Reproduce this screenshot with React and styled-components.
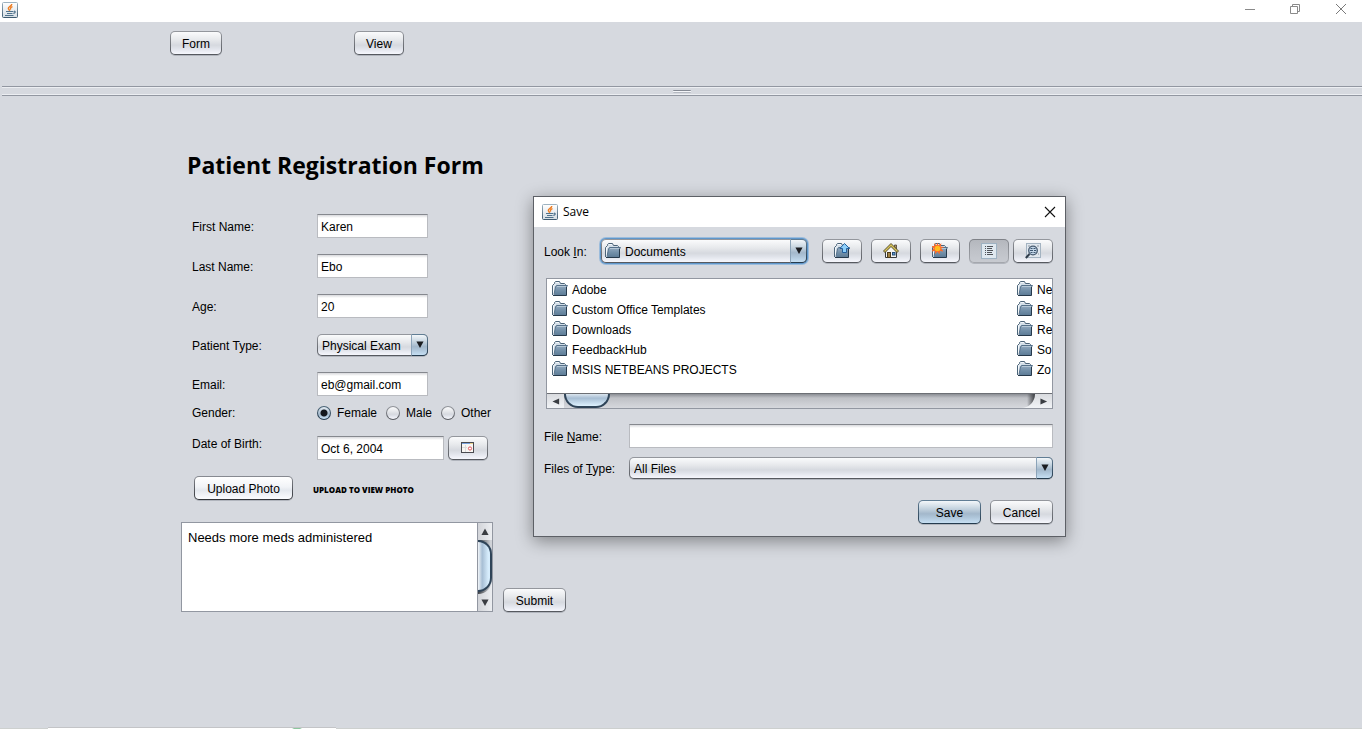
import React from "react";
import styled, { createGlobalStyle, css } from "styled-components";

const UI_FONT = '"Liberation Sans", Arial, sans-serif';
const TITLE_FONT = '"Open Sans", "Noto Sans", sans-serif';

const Global = createGlobalStyle`
  *, *::before, *::after { box-sizing: border-box; }
  body {
    margin: 0;
    background: #d6d9df;
    color: #000;
    font: 12px/16px ${UI_FONT};
  }
  button, input, select, textarea { font: inherit; color: inherit; }
`;

/* ---------- shared controls ---------- */

const silver = css`
  background:
    linear-gradient(#fafbfc, #e7e9ec 35%, #d6d9df 60%, #e0e3ea 75%, #f6f7fd) padding-box,
    linear-gradient(#95989e, #55585e) border-box;
`;
const blue = css`
  background:
    linear-gradient(#f3f7fa, #c4d3df 35%, #a3b8cb 58%, #afc6da 75%, #c6dff3) padding-box,
    linear-gradient(#627f96, #23394c) border-box;
`;
const white = css`
  background:
    linear-gradient(#ffffff, #f1f3f7 45%, #e4e8ee 60%, #fbfcff) padding-box,
    linear-gradient(#888b92, #303338) border-box;
`;
const pressed = css`
  background:
    linear-gradient(#b4b7bd, #bfc2c8 50%, #c7cad0) padding-box,
    linear-gradient(#7e8187, #a5a8ae) border-box;
`;
const faces = { silver, blue, white, pressed };

const Button = styled.button`
  height: 24px;
  padding: 1px 11px 0;
  border: 1px solid transparent;
  border-radius: 5px;
  box-shadow: 0 1px 0 rgba(110, 115, 125, 0.35);
  white-space: nowrap;
  min-width: ${(p) => p.$min || "0"};
  ${(p) => faces[p.$face || "silver"]}
`;

const IconButton = styled(Button)`
  display: flex;
  align-items: center;
  justify-content: center;
  width: 40px;
  padding: 0;
  flex: none;
`;

const Field = styled.input`
  width: ${(p) => (p.$width ? p.$width : "100%")};
  height: 24px;
  padding: 1px 3px 0;
  border: 1px solid #b9bbc0;
  border-top-color: #85888e;
  border-radius: 0;
  background: linear-gradient(#d8d9dc, #fff 3px);
  outline: none;
`;

const ComboBox = styled.div`
  position: relative;
  width: ${(p) => p.$width || "auto"};
  height: ${(p) => (p.$focused ? "24px" : "22px")};
  border-radius: 5px;
  box-shadow: ${(p) =>
    p.$focused
      ? "0 0 0 1px #5f97cb, 0 0 0 2px #9bbcdc"
      : "0 1px 0 rgba(110, 115, 125, 0.35)"};
`;
const ComboSelect = styled.select`
  display: block;
  appearance: none;
  width: 100%;
  height: 100%;
  padding: 1px 18px 0 ${(p) => (p.$icon ? "23px" : "4px")};
  border: 1px solid transparent;
  border-radius: 5px;
  outline: none;
  ${silver}
`;
const ComboArrow = styled.span`
  position: absolute;
  top: 0;
  right: 0;
  bottom: 0;
  width: 17px;
  display: flex;
  align-items: center;
  justify-content: center;
  border: 1px solid transparent;
  border-left-color: #8ba3b8;
  border-radius: 0 5px 5px 0;
  pointer-events: none;
  ${blue}
`;
const ComboIcon = styled.span`
  position: absolute;
  top: 4px;
  left: 4px;
  display: flex;
  pointer-events: none;
`;

function Combo({ id, icon, options, ...rest }) {
  return (
    <ComboBox {...rest}>
      <ComboSelect id={id} $icon={!!icon}>
        {options.map((o) => (
          <option key={o}>{o}</option>
        ))}
      </ComboSelect>
      {icon && <ComboIcon>{icon}</ComboIcon>}
      <ComboArrow>
        <Triangle dir="down" />
      </ComboArrow>
    </ComboBox>
  );
}

/* ---------- icons ---------- */

const paths = {
  down: "M0.5 0.5h8L4.5 8z",
  up: "M0.5 8h8L4.5 0.5z",
  left: "M8 0.5v8L0.5 4.5z",
  right: "M0.5 0.5v8L8 4.5z",
};
function Triangle({ dir, flat }) {
  const horizontal = dir === "left" || dir === "right";
  return (
    <svg
      width="8"
      height={horizontal ? 7 : 8}
      viewBox="0 0 9 9"
      preserveAspectRatio="none"
      aria-hidden="true"
    >
      <path d={paths[dir]} fill={flat ? "#3a3d42" : "#1a1c20"} />
    </svg>
  );
}

function JavaIcon() {
  return (
    <svg width="16" height="16" viewBox="0 0 16 16" aria-hidden="true">
      <defs>
        <linearGradient id="javaFace" x1="0" y1="0" x2="0" y2="1">
          <stop offset="0" stopColor="#ffffff" />
          <stop offset="1" stopColor="#d5dde4" />
        </linearGradient>
        <linearGradient id="javaEdge" x1="0" y1="0" x2="0" y2="1">
          <stop offset="0" stopColor="#9db2c0" />
          <stop offset="1" stopColor="#3e5a70" />
        </linearGradient>
      </defs>
      <rect x="0.5" y="0.5" width="15" height="15" rx="1" fill="url(#javaFace)" stroke="url(#javaEdge)" />
      <path d="M9.800 2C10 4 6 4.600 6.300 6.400C6.500 7.500 7.600 7.900 7.700 8.900M10.500 4.700C8.300 5.600 7.900 6.500 8.900 7.500" fill="none" stroke="#ee7d22" strokeWidth="1.400" />
      <path d="M4 9.500h7.500M5 11.500h5.500M12 9.200c1.800 0 1.400 2-0.700 2.200M3 13.500h8.500" fill="none" stroke="#4f728c" strokeWidth="1.200" />
    </svg>
  );
}

function FolderIcon({ children }) {
  return (
    <svg width="16" height="16" viewBox="0 0 16 16" aria-hidden="true">
      <defs>
        <linearGradient id="folderFront" x1="0" y1="0" x2="0" y2="1">
          <stop offset="0" stopColor="#94abc0" />
          <stop offset="0.5" stopColor="#7390a9" />
          <stop offset="1" stopColor="#5c7a95" />
        </linearGradient>
      </defs>
      <path d="M0.500 14V4.500L2.500 2.500V1.500L3.500 0.500H7.500L8.500 2.500H12.500L13.500 3.500V14" fill="#d3dee8" stroke="#4c6478" />
      <path d="M1.500 13.500V5L3.500 3M4 1.500h3" fill="none" stroke="#f4f8fb" />
      <path d="M4.500 4.500H15.500L14.500 6V14.500H2L3.500 6z" fill="url(#folderFront)" />
      <path d="M2 13.500L3.500 6L4.500 4.500H15.500L14.500 6" fill="none" stroke="#56718a" />
      <path d="M14.500 6v8.500H1" fill="none" stroke="#26394b" />
      <path d="M5 5.500h9" stroke="#b4c6d5" />
      {children}
    </svg>
  );
}

function UpFolderIcon() {
  return (
    <FolderIcon>
      <path d="M10.500 0.500L15.500 5.500H12.500V9.500H8.500V5.500H5.800z" fill="#8fd0fa" stroke="#235f9c" />
    </FolderIcon>
  );
}
function NewFolderIcon() {
  return (
    <FolderIcon>
      <path
        d="M5.500 -0.500L6.500 2.300L9.500 0.200L8.600 3.400L12 4L9.200 5.500L11.500 8.500L8 8L7.500 11.500L5.500 8.800L3 11L3 8L-0.500 8.500L1.500 5.500L-0.500 3L2.700 3L2 0L4.500 2.200z"
        fill="#fb6a2a"
      />
      <circle cx="5.500" cy="5.500" r="2.800" fill="#ffbb1c" />
    </FolderIcon>
  );
}
function HomeIcon() {
  return (
    <svg width="16" height="16" viewBox="0 0 16 16" aria-hidden="true">
      <path d="M11.500 2h2v4l-2-2z" fill="#b5986a" stroke="#4a4233" strokeWidth="0.800" />
      <path d="M2.500 8L8 2.500L13.500 8V14.500H2.500z" fill="#f5f5f3" stroke="#34383c" />
      <path d="M0.500 8L8 0.500L15.500 8L14 9.500L8 3.500L2 9.500z" fill="#d8c458" stroke="#4a4124" strokeWidth="0.900" />
      <rect x="4.500" y="9.500" width="3" height="5" fill="#a18242" stroke="#4d3b1b" />
      <rect x="9.500" y="9.500" width="2.500" height="2.500" fill="#5d9bd3" stroke="#274c74" />
    </svg>
  );
}
function ListIcon() {
  return (
    <svg width="16" height="16" viewBox="0 0 16 16" aria-hidden="true">
      <rect x="0.500" y="0.500" width="15" height="15" fill="#dfe8ef" stroke="#9eb2c2" />
      <path d="M4 3.500h1M4 5.500h1M4 7.500h1M4 9.500h1M4 11.500h1M6 3.500h6M6 5.500h5M6 7.500h6M6 9.500h5M6 11.500h6" stroke="#50545a" />
    </svg>
  );
}
function DetailsIcon() {
  return (
    <svg width="16" height="16" viewBox="0 0 16 16" aria-hidden="true">
      <rect x="1.500" y="0.500" width="14" height="14" fill="#e0e7ee" stroke="#a3b3c1" />
      <path d="M3 3h2M12 3h2M13 11h1" stroke="#8a96a2" />
      <path d="M4.500 11L0.800 15" stroke="#2f3c4a" strokeWidth="2" />
      <circle cx="8" cy="7.500" r="4.300" fill="#c3d6e8" stroke="#45596e" strokeWidth="1.300" />
      <path d="M5.500 5.500h2M8.500 5.500h2M5 7.500h3M9 7.500h2M5.500 9.500h2M8.500 9.500h2" stroke="#3c5670" />
    </svg>
  );
}
function CalendarIcon() {
  return (
    <svg width="14" height="12" viewBox="0 0 14 12" aria-hidden="true">
      <rect x="0.500" y="0.500" width="12" height="10" fill="#f8f6f3" stroke="#4a4b50" />
      <rect x="1" y="1" width="8" height="1" fill="#79a3df" />
      <rect x="9" y="1" width="3" height="1" fill="#e8cf8c" />
      <path d="M4.500 3v7M1 5.500h5" stroke="#dcdcdc" />
      <circle cx="9" cy="6.500" r="1.600" fill="#fff" stroke="#e3555a" />
    </svg>
  );
}

/* ---------- application window ---------- */

const Window = styled.div`
  display: flex;
  flex-direction: column;
  min-height: 100vh;
`;
const TitleBar = styled.header`
  display: flex;
  align-items: center;
  justify-content: space-between;
  height: 22px;
  padding: 0 15px 2px 2px;
  background: #fff;
`;
const WindowControls = styled.div`
  display: flex;
  gap: 35px;
  padding-bottom: 2px;
`;
const WindowControl = styled.button`
  display: flex;
  padding: 0;
  border: 0;
  background: none;
`;
const Toolbar = styled.nav`
  display: flex;
  align-items: flex-start;
  gap: 132px;
  height: 64px;
  padding: 9px 170px;
`;
const Divider = styled.div`
  display: flex;
  align-items: center;
  justify-content: center;
  height: 10px;
  margin-left: 2px;
  border: solid #9297a1;
  border-width: 1px 0;
  box-shadow: inset 0 1px 0 #eceef2, inset 0 -1px 0 #eceef2;
`;
const Grip = styled.span`
  width: 18px;
  height: 3px;
  border-top: 1px solid #858a94;
  border-bottom: 1px solid #b4b8c0;
  border-radius: 1px;
  background: #f4f5f8;
`;

const Main = styled.main`
  flex: 1;
  padding: 50px 20px 24px 181px;
`;
const Heading = styled.h1`
  margin: 0 0 30px 6px;
  font: 700 23px/38px ${TITLE_FONT};
`;
const Rows = styled.div`
  display: flex;
  flex-direction: column;
  gap: 16px;
  padding-left: 11px;
`;
const Row = styled.div`
  display: grid;
  grid-template-columns: 125px max-content;
  align-items: ${(p) => (p.$top ? "start" : "center")};
`;
const CompactRows = styled(Rows)`
  gap: 15px;
  margin: 9px 0 16px;
`;
const RowLabel = styled.label`
  padding-top: ${(p) => (p.$flush ? "0" : "1px")};
`;
const Inline = styled.div`
  display: flex;
  align-items: center;
  gap: ${(p) => p.$gap};
`;
const RadioLabel = styled.label`
  display: flex;
  align-items: center;
  gap: 6px;
`;
const Radio = styled.input`
  appearance: none;
  width: 14px;
  height: 14px;
  margin: 0;
  border: 1px solid transparent;
  border-radius: 50%;
  ${silver}
  &:checked {
    background:
      radial-gradient(circle, #14181d 0 3px, transparent 4px) padding-box,
      linear-gradient(#e6eef5, #a3b8cb 60%, #c6dff3) padding-box,
      linear-gradient(#4c6679, #23394c) border-box;
  }
`;
const Caption = styled.span`
  padding-top: 1px;
`;
const PhotoRow = styled.div`
  display: flex;
  align-items: center;
  gap: 20px;
  padding-left: 13px;
  margin-bottom: 22px;
`;
const PhotoNote = styled.span`
  padding-top: 3px;
  font: 800 8px/12px ${TITLE_FONT};
`;
const NotesRow = styled.div`
  display: flex;
  align-items: flex-end;
  gap: 10px;
`;
const NotesPane = styled.div`
  display: flex;
  width: 312px;
  height: 90px;
  border: 1px solid #9297a1;
  background: #fff;
`;
const Notes = styled.textarea`
  flex: 1;
  min-width: 0;
  padding: 7px 6px;
  border: 0;
  outline: none;
  resize: none;
  overflow: hidden;
  background: none;
  font-size: 13px;
`;

/* ---------- scroll bars ---------- */

const VBar = styled.div`
  display: flex;
  flex-direction: column;
  width: 15px;
  border-left: 1px solid #9297a1;
  background: linear-gradient(90deg, #d2d4d9, #eceef1);
`;
const VEnd = styled.span`
  display: flex;
  align-items: center;
  justify-content: center;
  height: 17px;
`;
const VTrack = styled.div`
  flex: 1;
  padding-bottom: 2px;
  background: linear-gradient(90deg, #3a3d42, #d0d3d8 90%);
  border-radius: 0 0 14px 0;
`;
const VThumb = styled.div`
  height: 100%;
  border: 2px solid #2f4458;
  border-left: 0;
  border-radius: 0 14px 14px 0;
  background: linear-gradient(90deg, #f2f6f9, #a7bed4 35%, #d6ecfc 85%);
`;
const HBar = styled.div`
  display: flex;
  height: 15px;
  border-top: 1px solid #6c6f75;
  background: linear-gradient(#d9dbdf, #f1f3f6);
`;
const HEnd = styled.span`
  display: flex;
  align-items: center;
  justify-content: center;
  width: 17px;
`;
const HTrack = styled.div`
  flex: 1;
  border-radius: 0 0 16px 0;
  background:
    linear-gradient(270deg, #3c3e42, transparent 8px),
    linear-gradient(#8b8e94, #bfc1c6 4px, #d6d8dd);
`;
const HThumb = styled.div`
  width: 46px;
  height: 14px;
  border: 2px solid #2f4458;
  border-top: 0;
  border-radius: 0 0 17px 17px;
  background: linear-gradient(#dbe5ee, #a7bed4 35%, #def2ff);
`;

/* ---------- save dialog ---------- */

const Dialog = styled.section`
  position: absolute;
  top: 196px;
  left: 533px;
  width: 533px;
  border: 1px solid #5d6066;
  background: #d6d9df;
  box-shadow: 0 4px 16px rgba(0, 0, 0, 0.4);
`;
const DialogTitle = styled.header`
  display: flex;
  align-items: center;
  gap: 5px;
  height: 30px;
  padding: 0 9px 0 8px;
  background: #fff;
`;
const DialogName = styled.h2`
  flex: 1;
  margin: 0;
  font: 400 12px/16px ${TITLE_FONT};
`;
const DialogBody = styled.div`
  padding: 12px 12px 12px 10px;
`;
const LookRow = styled.div`
  display: flex;
  align-items: center;
  margin-bottom: 15px;
`;
const LookLabel = styled.label`
  width: 57px;
  padding-top: 1px;
`;
const Tools = styled.div`
  display: flex;
  gap: 9px;
  margin-left: auto;
`;
const ViewTools = styled.div`
  display: flex;
  gap: 4px;
`;
const FilePane = styled.div`
  margin-left: 2px;
  border: 1px solid #9297a1;
  background: #fff;
`;
const FileColumns = styled.div`
  display: flex;
  height: 114px;
  overflow: hidden;
`;
const FileList = styled.ul`
  flex: none;
  width: 465px;
  margin: 0;
  padding: 0 5px;
  list-style: none;
`;
const FileItem = styled.li`
  display: flex;
  align-items: center;
  gap: 4px;
  height: 20px;
  white-space: nowrap;
`;
const FormRow = styled.div`
  display: grid;
  grid-template-columns: 85px 1fr;
  align-items: center;
  margin-top: ${(p) => p.$space};
`;
const Actions = styled.div`
  display: flex;
  justify-content: flex-end;
  gap: 9px;
  margin-top: 21px;
`;

const Footer = styled.footer`
  height: 2px;
  background: linear-gradient(transparent 50%, #cdd0cf 50%);
`;
const FooterStrip = styled.div`
  width: 288px;
  height: 2px;
  margin-left: 48px;
  border-top: 1px solid #c3c4c7;
  background: linear-gradient(90deg, #fff 244px, #8cc79e 246px 252px, #fff 254px);
`;

const textRows = [
  ["first", "First Name:", "Karen"],
  ["last", "Last Name:", "Ebo"],
  ["age", "Age:", "20"],
];
const folders = [
  ["Adobe", "Custom Office Templates", "Downloads", "FeedbackHub", "MSIS NETBEANS PROJECTS"],
  ["Ne", "Re", "Re", "So", "Zo"],
];

export default function App() {
  return (
    <Window>
      <Global />
      <TitleBar>
        <JavaIcon />
        <WindowControls>
          <WindowControl aria-label="Minimize">
            <svg width="10" height="10">
              <path d="M0 5.500h10" stroke="#8a8a8a" />
            </svg>
          </WindowControl>
          <WindowControl aria-label="Restore">
            <svg width="10" height="10" fill="none" stroke="#8a8a8a">
              <path d="M0.500 2.500h7v7h-7zM2.500 2.500v-2h7v7h-2" />
            </svg>
          </WindowControl>
          <WindowControl aria-label="Close">
            <svg width="12" height="10" stroke="#7a7a7a">
              <path d="M1 0l10 10M11 0L1 10" />
            </svg>
          </WindowControl>
        </WindowControls>
      </TitleBar>

      <Toolbar>
        <Button>Form</Button>
        <Button>View</Button>
      </Toolbar>
      <Divider>
        <Grip />
      </Divider>

      <Main>
        <Heading>Patient Registration Form</Heading>
        <Rows>
          {textRows.map(([id, label, value]) => (
            <Row key={id}>
              <RowLabel htmlFor={id}>{label}</RowLabel>
              <Field id={id} $width="111px" defaultValue={value} />
            </Row>
          ))}
          <Row>
            <RowLabel htmlFor="type">Patient Type:</RowLabel>
            <Combo id="type" $width="111px" options={["Physical Exam"]} />
          </Row>
          <Row>
            <RowLabel htmlFor="email">Email:</RowLabel>
            <Field id="email" $width="111px" defaultValue="eb@gmail.com" />
          </Row>
        </Rows>
        <CompactRows>
          <Row role="radiogroup" aria-labelledby="gender">
            <RowLabel as="span" id="gender" $flush>Gender:</RowLabel>
            <Inline $gap="9px">
              {["Female", "Male", "Other"].map((g) => (
                <RadioLabel key={g}>
                  <Radio type="radio" name="gender" defaultChecked={g === "Female"} />
                  {g}
                </RadioLabel>
              ))}
            </Inline>
          </Row>
          <Row $top>
            <RowLabel htmlFor="dob" $flush>Date of Birth:</RowLabel>
            <Inline $gap="4px">
              <Field id="dob" $width="127px" defaultValue="Oct 6, 2004" />
              <IconButton aria-label="Choose date">
                <CalendarIcon />
              </IconButton>
            </Inline>
          </Row>
        </CompactRows>
        <PhotoRow>
          <Button $face="white" $min="99px">Upload Photo</Button>
          <PhotoNote>UPLOAD TO VIEW PHOTO</PhotoNote>
        </PhotoRow>
        <NotesRow>
          <NotesPane>
            <Notes aria-label="Notes" defaultValue="Needs more meds administered" />
            <VBar aria-hidden="true">
              <VEnd><Triangle dir="up" flat /></VEnd>
              <VTrack><VThumb /></VTrack>
              <VEnd><Triangle dir="down" flat /></VEnd>
            </VBar>
          </NotesPane>
          <Button $min="63px">Submit</Button>
        </NotesRow>
      </Main>

      <Footer>
        <FooterStrip />
      </Footer>

      <Dialog role="dialog" aria-labelledby="dialog-name">
        <DialogTitle>
          <JavaIcon />
          <DialogName id="dialog-name">Save</DialogName>
          <WindowControl aria-label="Close dialog">
            <svg width="12" height="12" stroke="#111">
              <path d="M1 1l10 10M11 1L1 11" strokeWidth="1.100" />
            </svg>
          </WindowControl>
        </DialogTitle>
        <DialogBody>
          <LookRow>
            <LookLabel htmlFor="look">Look <u>I</u>n:</LookLabel>
            <Combo id="look" $width="206px" $focused icon={<FolderIcon />} options={["Documents"]} />
            <Tools>
              <IconButton aria-label="Up one level"><UpFolderIcon /></IconButton>
              <IconButton aria-label="Home"><HomeIcon /></IconButton>
              <IconButton aria-label="New folder"><NewFolderIcon /></IconButton>
              <ViewTools>
                <IconButton aria-label="List" $face="pressed"><ListIcon /></IconButton>
                <IconButton aria-label="Details"><DetailsIcon /></IconButton>
              </ViewTools>
            </Tools>
          </LookRow>
          <FilePane>
            <FileColumns>
              {folders.map((names, c) => (
                <FileList key={c}>
                  {names.map((n, i) => (
                    <FileItem key={i}>
                      <FolderIcon />
                      <Caption>{n}</Caption>
                    </FileItem>
                  ))}
                </FileList>
              ))}
            </FileColumns>
            <HBar aria-hidden="true">
              <HEnd><Triangle dir="left" flat /></HEnd>
              <HTrack><HThumb /></HTrack>
              <HEnd><Triangle dir="right" flat /></HEnd>
            </HBar>
          </FilePane>
          <FormRow $space="15px">
            <RowLabel htmlFor="file">File <u>N</u>ame:</RowLabel>
            <Field id="file" />
          </FormRow>
          <FormRow $space="9px">
            <RowLabel htmlFor="kind">Files of <u>T</u>ype:</RowLabel>
            <Combo id="kind" options={["All Files"]} />
          </FormRow>
          <Actions>
            <Button $face="blue" $min="63px">Save</Button>
            <Button $min="63px">Cancel</Button>
          </Actions>
        </DialogBody>
      </Dialog>
    </Window>
  );
}
